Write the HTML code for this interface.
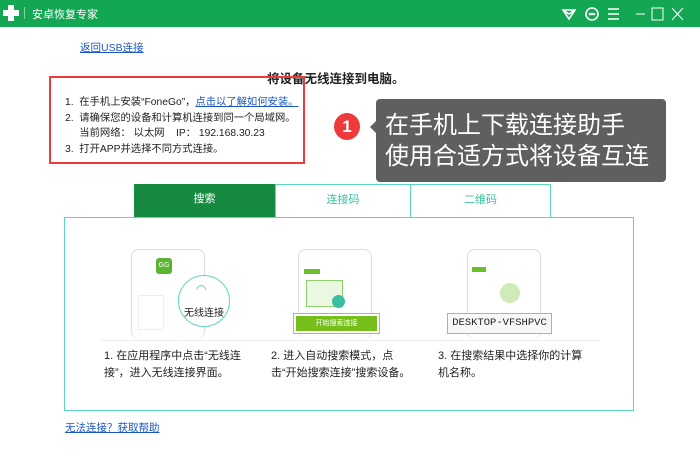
<!DOCTYPE html><html><head><meta charset="utf-8"><style>
*{margin:0;padding:0;box-sizing:border-box}
body{width:700px;height:467px;background:#fff;font-family:"Liberation Sans","Noto Sans CJK SC",sans-serif;position:relative;overflow:hidden;color:#222}
.a{position:absolute}
.bar{left:0;top:0;width:700px;height:27px;background:#13a653}
a{color:#1a56c6;text-decoration:underline}
.phone{position:absolute;border:1px solid #ddd;border-radius:8px;background:#fff;width:74px;height:90px;border-bottom:none}
.cap{font-size:11px;line-height:17px;color:#222;position:absolute;white-space:nowrap}
</style></head><body>
<div class="a bar"></div>
<div class="a" style="left:3px;top:5px;width:16px;height:16px"><div class="a" style="left:5px;top:0;width:6px;height:16px;background:#fff"></div><div class="a" style="left:0;top:5px;width:16px;height:6px;background:#fff"></div></div>
<div class="a" style="left:24px;top:7px;width:1px;height:12px;background:#7fd4a0"></div>
<div class="a" style="left:32px;top:6px;color:#fff;font-size:11px">安卓恢复专家</div>
<svg class="a" style="left:560px;top:5px" width="130" height="18" viewBox="0 0 130 18" fill="none" stroke="#fff" stroke-width="1.6">
<path d="M3 5h12l-6 9z M3 5l6 4 6-4"/><circle cx="32" cy="9" r="6"/><circle cx="30" cy="9" r=".5"/><circle cx="32" cy="9" r=".5"/><circle cx="34" cy="9" r=".5"/>
<path d="M48 4h11M48 9h11M48 14h11"/><path d="M76 9h9" stroke-width="1"/><rect x="92" y="3" width="11" height="12" stroke-width="1"/><path d="M112 3l11 12M123 3l-11 12" stroke-width="1"/></svg>
<a class="a" style="left:80px;top:40px;font-size:10.5px">返回USB连接</a>
<div class="a" style="left:267px;top:68px;font-size:12.5px;font-weight:bold">将设备无线连接到电脑。</div>
<div class="a" style="left:49px;top:76px;width:256px;height:88px;border:2px solid #ee3a3a"></div>
<div class="a" style="left:65px;top:95px;font-size:10.3px;line-height:15.5px;white-space:nowrap">1.&nbsp; 在手机上安装“FoneGo”，<a>点击以了解如何安装。</a><br>2.&nbsp; 请确保您的设备和计算机连接到同一个局域网。<br>&nbsp;&nbsp;&nbsp;&nbsp;&nbsp;当前网络： 以太网 &nbsp;&nbsp; IP： 192.168.30.23<br>3.&nbsp; 打开APP并选择不同方式连接。</div>
<div class="a" style="left:334px;top:113px;width:26px;height:27px;border-radius:50%;background:#ee3a3a;color:#fff;font-size:17px;font-weight:bold;text-align:center;line-height:27px">1</div>
<div class="a" style="left:364px;top:121px;width:0;height:0;border:6px solid transparent;border-right-color:#5f5f5f"></div>
<div class="a" style="left:376px;top:99px;width:290px;height:83px;background:#5f5f5f;border-radius:4px;color:#fff;font-size:24px;line-height:31px;padding:11px 0 0 9px;white-space:nowrap">在手机上下载连接助手<br>使用合适方式将设备互连</div>
<div class="a" style="left:134px;top:184px;width:141px;height:34px;background:#178a42;color:#fff;font-size:11px;text-align:center;line-height:30px">搜索</div>
<div class="a" style="left:275px;top:184px;width:136px;height:34px;border:1px solid #5cd6be;border-bottom:none;color:#3bbfa0;font-size:11px;text-align:center;line-height:30px">连接码</div>
<div class="a" style="left:410px;top:184px;width:141px;height:34px;border:1px solid #5cd6be;border-bottom:none;color:#3bbfa0;font-size:11px;text-align:center;line-height:30px">二维码</div>
<div class="a" style="left:64px;top:217px;width:570px;height:194px;border:1px solid #5cd6be"></div>
<div class="phone" style="left:131px;top:249px"></div>
<div class="a" style="left:156px;top:258px;width:16px;height:16px;background:#5cb531;border-radius:3px;color:#fff;font-size:7px;text-align:center;line-height:16px">GG</div>
<div class="a" style="left:138px;top:295px;width:26px;height:35px;border:1px solid #eee"></div>
<div class="a" style="left:178px;top:275px;width:52px;height:52px;border-radius:50%;border:1px solid #5cd6be;background:#fff;text-align:center;font-size:10px;padding-top:28px">无线连接</div>
<div class="a" style="left:196px;top:282px;color:#3bbfa0;font-size:12px">◠</div>
<div class="phone" style="left:298px;top:249px"></div>
<div class="a" style="left:304px;top:269px;width:16px;height:5px;background:#6bbf2a"></div>
<div class="a" style="left:306px;top:280px;width:37px;height:27px;border:1px solid #8ed06b;background:#eaf7e2"></div>
<div class="a" style="left:332px;top:295px;width:13px;height:13px;border-radius:50%;background:#3bbfa0"></div>
<div class="a" style="left:293px;top:313px;width:87px;height:21px;border:1px solid #5cd6be;padding:2px;background:#fff"><div style="background:#76bf1a;height:100%;color:#fff;font-size:7px;text-align:center;line-height:15px">开始搜索连接</div></div>
<div class="phone" style="left:467px;top:249px"></div>
<div class="a" style="left:472px;top:267px;width:14px;height:5px;background:#6bbf2a"></div>
<div class="a" style="left:500px;top:283px;width:20px;height:20px;border-radius:50%;background:#cfecb8"></div>
<div class="a" style="left:447px;top:313px;width:105px;height:21px;border:1px solid #5cd6be;background:#f8f8f8;font-family:'Liberation Mono',monospace;font-size:10.5px;text-align:center;line-height:19px">DESKTOP-VFSHPVC</div>
<div class="a" style="left:100px;top:340px;width:500px;height:1px;background:#eee"></div>
<div class="cap" style="left:104px;top:348px">1. 在应用程序中点击“无线连<br>接”，进入无线连接界面。</div>
<div class="cap" style="left:271px;top:348px">2. 进入自动搜索模式，点<br>击“开始搜索连接”搜索设备。</div>
<div class="cap" style="left:438px;top:348px">3. 在搜索结果中选择你的计算<br>机名称。</div>
<a class="a" style="left:65px;top:420px;font-size:10.5px">无法连接？获取帮助</a>
</body></html>
